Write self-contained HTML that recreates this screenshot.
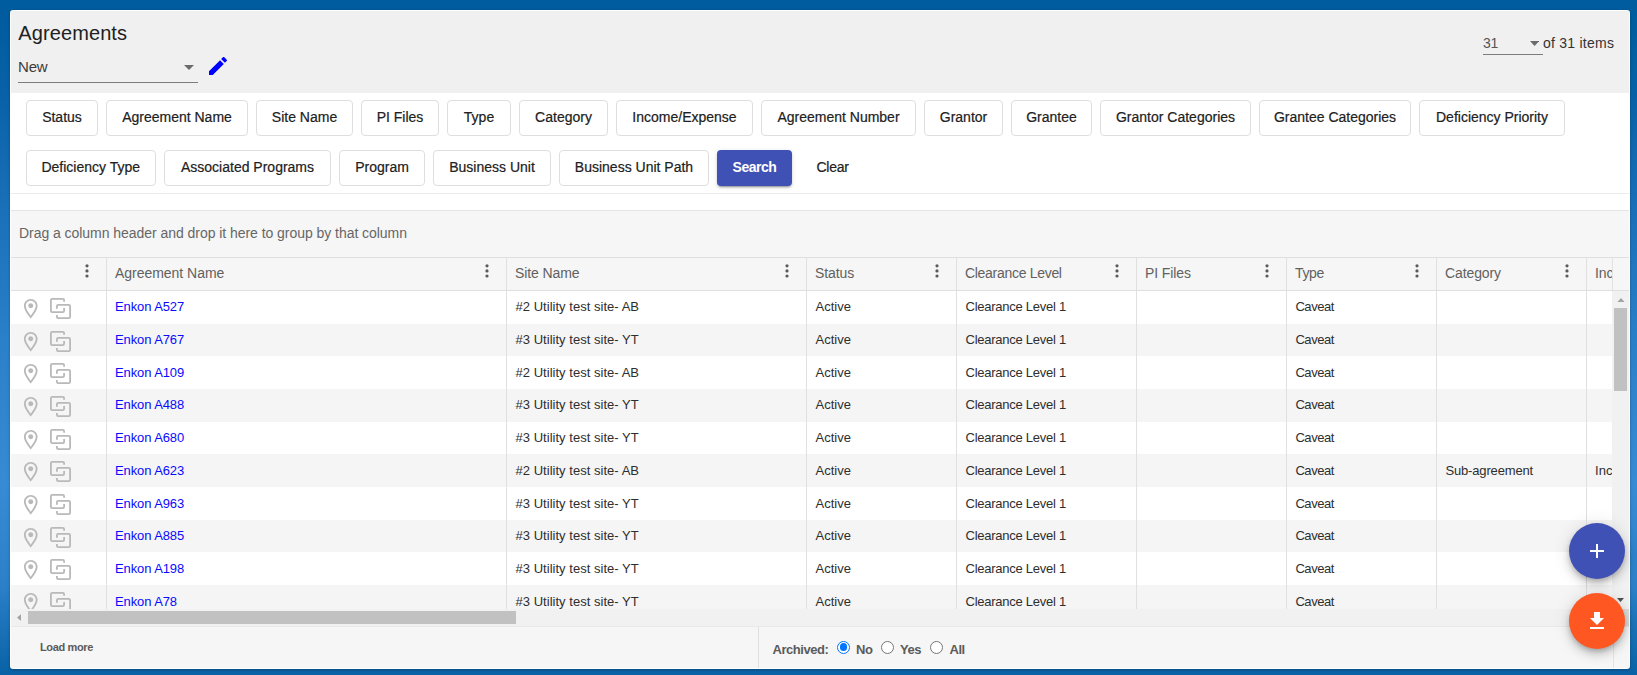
<!DOCTYPE html>
<html lang="en"><head><meta charset="utf-8"><title>Agreements</title>
<style>
*{box-sizing:border-box}
html,body{margin:0;padding:0}
body{width:1637px;height:675px;overflow:hidden;position:relative;font-family:"Liberation Sans",Arial,sans-serif;color:rgba(0,0,0,.87);
 background:linear-gradient(180deg,#005c9e 0px,#005c9e 12px,#0962a8 100px,#1a70b8 205px,#2a80c8 336px,#378bd4 486px,#2b80c8 586px,#0b64a8 668px,#0a62a6 675px);}
.abs{position:absolute}
.panel{position:absolute;left:10px;top:10px;width:1620px;height:658.7px;background:#fff;border-radius:3px;overflow:hidden;box-shadow:0 1px 3px rgba(0,0,0,.3)}
.tophdr{position:absolute;left:1px;top:1px;width:1618px;height:82px;background:#f0f0f0}
.t{position:absolute;white-space:nowrap;line-height:1}
.title{left:8.300px;top:13.300px;font-size:20px;color:#212121;letter-spacing:.1px}
.sel{position:absolute;border-bottom:1px solid #7d7d7d}
.caret{position:absolute;width:0;height:0;border-left:5px solid transparent;border-right:5px solid transparent;border-top:5px solid #6b6b6b}
.fb{position:absolute;height:36px;border:1px solid #dedede;border-radius:4px;background:#fff;font-size:14px;line-height:32px;text-align:center;white-space:nowrap;color:#212121;-webkit-text-stroke:.2px #212121}
.search{position:absolute;left:707px;top:140px;width:75px;height:36px;border-radius:4px;background:#3f51b5;color:#fff;font-weight:700;font-size:14px;line-height:34px;text-align:center;letter-spacing:-.48px;box-shadow:0 3px 1px -2px rgba(0,0,0,.2),0 2px 2px 0 rgba(0,0,0,.14),0 1px 5px 0 rgba(0,0,0,.12)}
.hline{position:absolute;left:0;width:1620px;height:1px}
.group{position:absolute;left:1px;top:200px;width:1618px;height:47px;background:#f6f6f6;border-top:1px solid #e4e4e4}
.ghead{position:absolute;left:1px;top:247px;width:1618px;height:34px;background:#f6f6f6;border-top:1px solid #dfdfdf;border-bottom:1px solid #dfdfdf}
.vl{position:absolute;width:1px;background:#e0e0e0}
.ht{font-size:14px;color:#616161;top:7.500px;letter-spacing:-.1px}
.row{position:absolute;left:1px;width:1601px;background:#fff;overflow:hidden}
.row.alt{background:#f5f5f5}
.c{position:absolute;font-size:13px;line-height:1;white-space:nowrap;color:#2e2e2e;letter-spacing:.03px}
a.c{letter-spacing:-.1px;color:#0a0aff;text-decoration:none}
.pin{position:absolute;left:8.250px;width:23.500px;height:23.500px;fill:#b9b9b9}
.cpy{position:absolute;left:39px;width:21px;height:21px}
.dots{position:absolute;width:4px;height:14px;fill:#5a5a5a;overflow:visible}
.fab{position:absolute;width:56px;height:56px;border-radius:50%;box-shadow:0 3px 5px -1px rgba(0,0,0,.2),0 6px 10px 0 rgba(0,0,0,.14),0 1px 18px 0 rgba(0,0,0,.12)}
.radio{position:absolute;width:13px;height:13px;border-radius:50%;border:1px solid #767676;background:#fff}
.radio.on{border:1.250px solid #0075ff}
.radio.on::after{content:"";position:absolute;left:1.550px;top:1.550px;width:7.400px;height:7.400px;border-radius:50%;background:#0075ff}
.fl{font-size:13px;font-weight:700;color:#5b5b5b;letter-spacing:-.45px}
</style></head><body>
<div class="panel">
<div class="tophdr"></div>
<div class="t title">Agreements</div>
<div class="sel" style="left:8px;top:44px;width:180px;height:29px"></div>
<div class="t" style="left:8px;top:48.500px;font-size:15px;color:#3c3c3c;letter-spacing:-.2px">New</div>
<div class="caret" style="left:173.500px;top:55px"></div>
<svg class="abs" style="left:196px;top:44px;width:24px;height:24px" viewBox="0 0 24 24"><path fill="#0000ff" d="M3 17.250V21h3.750L17.810 9.940l-3.750-3.750L3 17.250zM20.710 7.040c.390-.390.390-1.020 0-1.410l-2.340-2.340c-.390-.390-1.020-.390-1.410 0l-1.830 1.830 3.750 3.750 1.830-1.830z"/></svg>
<div class="sel" style="left:1473px;top:20px;width:60px;height:24.500px"></div>
<div class="t" style="left:1473px;top:26px;font-size:14px;color:#555;letter-spacing:-.2px">31</div>
<svg class="abs" style="left:1519.700px;top:31.100px;width:9.200px;height:5px" viewBox="0 0 9.200 5"><path d="M0 0H9.200L4.600 5z" fill="#6b6b6b"/></svg>
<div class="t" style="left:1533px;top:26px;font-size:14px;color:#333;letter-spacing:.24px">of 31 items</div>
<div class="fb" style="left:16px;top:90px;width:72px">Status</div>
<div class="fb" style="left:96px;top:90px;width:142px">Agreement Name</div>
<div class="fb" style="left:246px;top:90px;width:97px">Site Name</div>
<div class="fb" style="left:351px;top:90px;width:78px">PI Files</div>
<div class="fb" style="left:437px;top:90px;width:64px">Type</div>
<div class="fb" style="left:509px;top:90px;width:89px">Category</div>
<div class="fb" style="left:606px;top:90px;width:137px">Income/Expense</div>
<div class="fb" style="left:751px;top:90px;width:155px">Agreement Number</div>
<div class="fb" style="left:914px;top:90px;width:79px">Grantor</div>
<div class="fb" style="left:1001px;top:90px;width:81px">Grantee</div>
<div class="fb" style="left:1090px;top:90px;width:151px">Grantor Categories</div>
<div class="fb" style="left:1249px;top:90px;width:152px">Grantee Categories</div>
<div class="fb" style="left:1409px;top:90px;width:146px">Deficiency Priority</div>
<div class="fb" style="left:16px;top:140px;width:129.5px">Deficiency Type</div>
<div class="fb" style="left:154px;top:140px;width:167px">Associated Programs</div>
<div class="fb" style="left:329px;top:140px;width:86px">Program</div>
<div class="fb" style="left:423px;top:140px;width:118px">Business Unit</div>
<div class="fb" style="left:549px;top:140px;width:150px">Business Unit Path</div>
<div class="search">Search</div>
<div class="t" style="left:806.500px;top:149.500px;font-size:14px;color:#212121;letter-spacing:-.25px;-webkit-text-stroke:.2px #212121">Clear</div>
<div class="hline" style="top:183px;background:#ececec"></div>
<div class="group"><div class="t" style="left:8px;top:15px;font-size:14px;color:#666;letter-spacing:-.045px">Drag a column header and drop it here to group by that column</div></div>
<div class="row" style="top:280.80px;height:33.00px"><svg class="pin" style="top:6.100px" viewBox="0 0 24 24"><path d="M12 2C8.130 2 5 5.130 5 9c0 5.250 7 13 7 13s7-7.750 7-13c0-3.870-3.130-7-7-7zM6.900 9c0-2.820 2.280-5.100 5.100-5.100s5.100 2.280 5.100 5.100c0 2.940-2.940 7.300-5.100 10.050C9.880 16.330 6.900 11.910 6.900 9z"/><circle cx="12" cy="9" r="2.550"/></svg><svg class="cpy" style="top:7px" viewBox="0 0 21 21" fill="none" stroke="#b9b9b9" stroke-width="1.800"><path d="M14.100 3.700V2.200Q14.100 .900 12.800 .900H2.200Q.900 .900 .900 2.200V12.800Q.900 14.100 2.200 14.100H12.800Q14.100 14.100 14.100 12.800V10.100"/><path d="M6.900 10.800V8.200Q6.900 6.900 8.200 6.900H18.800Q20.100 6.900 20.100 8.200V18.800Q20.100 20.100 18.800 20.100H8.200Q6.900 20.100 6.900 18.800V17"/></svg><a class="c" style="left:104px;top:9.500px">Enkon A527</a><span class="c" style="left:504.500px;top:9.500px">#2 Utility test site- AB</span><span class="c" style="left:804.500px;top:9.500px">Active</span><span class="c" style="left:954.500px;top:9.500px;letter-spacing:-.26px">Clearance Level 1</span><span class="c" style="left:1284.400px;top:9.500px;letter-spacing:-.42px">Caveat</span></div>
<div class="row alt" style="top:313.50px;height:33.00px"><svg class="pin" style="top:6.100px" viewBox="0 0 24 24"><path d="M12 2C8.130 2 5 5.130 5 9c0 5.250 7 13 7 13s7-7.750 7-13c0-3.870-3.130-7-7-7zM6.900 9c0-2.820 2.280-5.100 5.100-5.100s5.100 2.280 5.100 5.100c0 2.940-2.940 7.300-5.100 10.050C9.880 16.330 6.900 11.910 6.900 9z"/><circle cx="12" cy="9" r="2.550"/></svg><svg class="cpy" style="top:7px" viewBox="0 0 21 21" fill="none" stroke="#b9b9b9" stroke-width="1.800"><path d="M14.100 3.700V2.200Q14.100 .900 12.800 .900H2.200Q.900 .900 .900 2.200V12.800Q.900 14.100 2.200 14.100H12.800Q14.100 14.100 14.100 12.800V10.100"/><path d="M6.900 10.800V8.200Q6.900 6.900 8.200 6.900H18.800Q20.100 6.900 20.100 8.200V18.800Q20.100 20.100 18.800 20.100H8.200Q6.900 20.100 6.900 18.800V17"/></svg><a class="c" style="left:104px;top:9.500px">Enkon A767</a><span class="c" style="left:504.500px;top:9.500px">#3 Utility test site- YT</span><span class="c" style="left:804.500px;top:9.500px">Active</span><span class="c" style="left:954.500px;top:9.500px;letter-spacing:-.26px">Clearance Level 1</span><span class="c" style="left:1284.400px;top:9.500px;letter-spacing:-.42px">Caveat</span></div>
<div class="row" style="top:346.20px;height:33.00px"><svg class="pin" style="top:6.100px" viewBox="0 0 24 24"><path d="M12 2C8.130 2 5 5.130 5 9c0 5.250 7 13 7 13s7-7.750 7-13c0-3.870-3.130-7-7-7zM6.900 9c0-2.820 2.280-5.100 5.100-5.100s5.100 2.280 5.100 5.100c0 2.940-2.940 7.300-5.100 10.050C9.880 16.330 6.900 11.910 6.900 9z"/><circle cx="12" cy="9" r="2.550"/></svg><svg class="cpy" style="top:7px" viewBox="0 0 21 21" fill="none" stroke="#b9b9b9" stroke-width="1.800"><path d="M14.100 3.700V2.200Q14.100 .900 12.800 .900H2.200Q.900 .900 .900 2.200V12.800Q.900 14.100 2.200 14.100H12.800Q14.100 14.100 14.100 12.800V10.100"/><path d="M6.900 10.800V8.200Q6.900 6.900 8.200 6.900H18.800Q20.100 6.900 20.100 8.200V18.800Q20.100 20.100 18.800 20.100H8.200Q6.900 20.100 6.900 18.800V17"/></svg><a class="c" style="left:104px;top:9.500px">Enkon A109</a><span class="c" style="left:504.500px;top:9.500px">#2 Utility test site- AB</span><span class="c" style="left:804.500px;top:9.500px">Active</span><span class="c" style="left:954.500px;top:9.500px;letter-spacing:-.26px">Clearance Level 1</span><span class="c" style="left:1284.400px;top:9.500px;letter-spacing:-.42px">Caveat</span></div>
<div class="row alt" style="top:378.90px;height:33.00px"><svg class="pin" style="top:6.100px" viewBox="0 0 24 24"><path d="M12 2C8.130 2 5 5.130 5 9c0 5.250 7 13 7 13s7-7.750 7-13c0-3.870-3.130-7-7-7zM6.900 9c0-2.820 2.280-5.100 5.100-5.100s5.100 2.280 5.100 5.100c0 2.940-2.940 7.300-5.100 10.050C9.880 16.330 6.900 11.910 6.900 9z"/><circle cx="12" cy="9" r="2.550"/></svg><svg class="cpy" style="top:7px" viewBox="0 0 21 21" fill="none" stroke="#b9b9b9" stroke-width="1.800"><path d="M14.100 3.700V2.200Q14.100 .900 12.800 .900H2.200Q.900 .900 .900 2.200V12.800Q.900 14.100 2.200 14.100H12.800Q14.100 14.100 14.100 12.800V10.100"/><path d="M6.900 10.800V8.200Q6.900 6.900 8.200 6.900H18.800Q20.100 6.900 20.100 8.200V18.800Q20.100 20.100 18.800 20.100H8.200Q6.900 20.100 6.900 18.800V17"/></svg><a class="c" style="left:104px;top:9.500px">Enkon A488</a><span class="c" style="left:504.500px;top:9.500px">#3 Utility test site- YT</span><span class="c" style="left:804.500px;top:9.500px">Active</span><span class="c" style="left:954.500px;top:9.500px;letter-spacing:-.26px">Clearance Level 1</span><span class="c" style="left:1284.400px;top:9.500px;letter-spacing:-.42px">Caveat</span></div>
<div class="row" style="top:411.60px;height:33.00px"><svg class="pin" style="top:6.100px" viewBox="0 0 24 24"><path d="M12 2C8.130 2 5 5.130 5 9c0 5.250 7 13 7 13s7-7.750 7-13c0-3.870-3.130-7-7-7zM6.900 9c0-2.820 2.280-5.100 5.100-5.100s5.100 2.280 5.100 5.100c0 2.940-2.940 7.300-5.100 10.050C9.880 16.330 6.900 11.910 6.900 9z"/><circle cx="12" cy="9" r="2.550"/></svg><svg class="cpy" style="top:7px" viewBox="0 0 21 21" fill="none" stroke="#b9b9b9" stroke-width="1.800"><path d="M14.100 3.700V2.200Q14.100 .900 12.800 .900H2.200Q.900 .900 .900 2.200V12.800Q.900 14.100 2.200 14.100H12.800Q14.100 14.100 14.100 12.800V10.100"/><path d="M6.900 10.800V8.200Q6.900 6.900 8.200 6.900H18.800Q20.100 6.900 20.100 8.200V18.800Q20.100 20.100 18.800 20.100H8.200Q6.900 20.100 6.900 18.800V17"/></svg><a class="c" style="left:104px;top:9.500px">Enkon A680</a><span class="c" style="left:504.500px;top:9.500px">#3 Utility test site- YT</span><span class="c" style="left:804.500px;top:9.500px">Active</span><span class="c" style="left:954.500px;top:9.500px;letter-spacing:-.26px">Clearance Level 1</span><span class="c" style="left:1284.400px;top:9.500px;letter-spacing:-.42px">Caveat</span></div>
<div class="row alt" style="top:444.30px;height:33.00px"><svg class="pin" style="top:6.100px" viewBox="0 0 24 24"><path d="M12 2C8.130 2 5 5.130 5 9c0 5.250 7 13 7 13s7-7.750 7-13c0-3.870-3.130-7-7-7zM6.900 9c0-2.820 2.280-5.100 5.100-5.100s5.100 2.280 5.100 5.100c0 2.940-2.940 7.300-5.100 10.050C9.880 16.330 6.900 11.910 6.900 9z"/><circle cx="12" cy="9" r="2.550"/></svg><svg class="cpy" style="top:7px" viewBox="0 0 21 21" fill="none" stroke="#b9b9b9" stroke-width="1.800"><path d="M14.100 3.700V2.200Q14.100 .900 12.800 .900H2.200Q.900 .900 .900 2.200V12.800Q.900 14.100 2.200 14.100H12.800Q14.100 14.100 14.100 12.800V10.100"/><path d="M6.900 10.800V8.200Q6.900 6.900 8.200 6.900H18.800Q20.100 6.900 20.100 8.200V18.800Q20.100 20.100 18.800 20.100H8.200Q6.900 20.100 6.900 18.800V17"/></svg><a class="c" style="left:104px;top:9.500px">Enkon A623</a><span class="c" style="left:504.500px;top:9.500px">#2 Utility test site- AB</span><span class="c" style="left:804.500px;top:9.500px">Active</span><span class="c" style="left:954.500px;top:9.500px;letter-spacing:-.26px">Clearance Level 1</span><span class="c" style="left:1284.400px;top:9.500px;letter-spacing:-.42px">Caveat</span><span class="c" style="left:1434.400px;top:9.500px;letter-spacing:-.15px">Sub-agreement</span><span class="c" style="left:1584px;top:9.500px">Inc</span></div>
<div class="row" style="top:477.00px;height:33.00px"><svg class="pin" style="top:6.100px" viewBox="0 0 24 24"><path d="M12 2C8.130 2 5 5.130 5 9c0 5.250 7 13 7 13s7-7.750 7-13c0-3.870-3.130-7-7-7zM6.900 9c0-2.820 2.280-5.100 5.100-5.100s5.100 2.280 5.100 5.100c0 2.940-2.940 7.300-5.100 10.050C9.880 16.330 6.900 11.910 6.900 9z"/><circle cx="12" cy="9" r="2.550"/></svg><svg class="cpy" style="top:7px" viewBox="0 0 21 21" fill="none" stroke="#b9b9b9" stroke-width="1.800"><path d="M14.100 3.700V2.200Q14.100 .900 12.800 .900H2.200Q.900 .900 .900 2.200V12.800Q.900 14.100 2.200 14.100H12.800Q14.100 14.100 14.100 12.800V10.100"/><path d="M6.900 10.800V8.200Q6.900 6.900 8.200 6.900H18.800Q20.100 6.900 20.100 8.200V18.800Q20.100 20.100 18.800 20.100H8.200Q6.900 20.100 6.900 18.800V17"/></svg><a class="c" style="left:104px;top:9.500px">Enkon A963</a><span class="c" style="left:504.500px;top:9.500px">#3 Utility test site- YT</span><span class="c" style="left:804.500px;top:9.500px">Active</span><span class="c" style="left:954.500px;top:9.500px;letter-spacing:-.26px">Clearance Level 1</span><span class="c" style="left:1284.400px;top:9.500px;letter-spacing:-.42px">Caveat</span></div>
<div class="row alt" style="top:509.70px;height:33.00px"><svg class="pin" style="top:6.100px" viewBox="0 0 24 24"><path d="M12 2C8.130 2 5 5.130 5 9c0 5.250 7 13 7 13s7-7.750 7-13c0-3.870-3.130-7-7-7zM6.900 9c0-2.820 2.280-5.100 5.100-5.100s5.100 2.280 5.100 5.100c0 2.940-2.940 7.300-5.100 10.050C9.880 16.330 6.900 11.910 6.900 9z"/><circle cx="12" cy="9" r="2.550"/></svg><svg class="cpy" style="top:7px" viewBox="0 0 21 21" fill="none" stroke="#b9b9b9" stroke-width="1.800"><path d="M14.100 3.700V2.200Q14.100 .900 12.800 .900H2.200Q.900 .900 .900 2.200V12.800Q.900 14.100 2.200 14.100H12.800Q14.100 14.100 14.100 12.800V10.100"/><path d="M6.900 10.800V8.200Q6.900 6.900 8.200 6.900H18.800Q20.100 6.900 20.100 8.200V18.800Q20.100 20.100 18.800 20.100H8.200Q6.900 20.100 6.900 18.800V17"/></svg><a class="c" style="left:104px;top:9.500px">Enkon A885</a><span class="c" style="left:504.500px;top:9.500px">#3 Utility test site- YT</span><span class="c" style="left:804.500px;top:9.500px">Active</span><span class="c" style="left:954.500px;top:9.500px;letter-spacing:-.26px">Clearance Level 1</span><span class="c" style="left:1284.400px;top:9.500px;letter-spacing:-.42px">Caveat</span></div>
<div class="row" style="top:542.40px;height:33.00px"><svg class="pin" style="top:6.100px" viewBox="0 0 24 24"><path d="M12 2C8.130 2 5 5.130 5 9c0 5.250 7 13 7 13s7-7.750 7-13c0-3.870-3.130-7-7-7zM6.900 9c0-2.820 2.280-5.100 5.100-5.100s5.100 2.280 5.100 5.100c0 2.940-2.940 7.300-5.100 10.050C9.880 16.330 6.900 11.910 6.900 9z"/><circle cx="12" cy="9" r="2.550"/></svg><svg class="cpy" style="top:7px" viewBox="0 0 21 21" fill="none" stroke="#b9b9b9" stroke-width="1.800"><path d="M14.100 3.700V2.200Q14.100 .900 12.800 .900H2.200Q.900 .900 .900 2.200V12.800Q.900 14.100 2.200 14.100H12.800Q14.100 14.100 14.100 12.800V10.100"/><path d="M6.900 10.800V8.200Q6.900 6.900 8.200 6.900H18.800Q20.100 6.900 20.100 8.200V18.800Q20.100 20.100 18.800 20.100H8.200Q6.900 20.100 6.900 18.800V17"/></svg><a class="c" style="left:104px;top:9.500px">Enkon A198</a><span class="c" style="left:504.500px;top:9.500px">#3 Utility test site- YT</span><span class="c" style="left:804.500px;top:9.500px">Active</span><span class="c" style="left:954.500px;top:9.500px;letter-spacing:-.26px">Clearance Level 1</span><span class="c" style="left:1284.400px;top:9.500px;letter-spacing:-.42px">Caveat</span></div>
<div class="row alt" style="top:575.10px;height:33.00px"><svg class="pin" style="top:6.100px" viewBox="0 0 24 24"><path d="M12 2C8.130 2 5 5.130 5 9c0 5.250 7 13 7 13s7-7.750 7-13c0-3.870-3.130-7-7-7zM6.900 9c0-2.820 2.280-5.100 5.100-5.100s5.100 2.280 5.100 5.100c0 2.940-2.940 7.300-5.100 10.050C9.880 16.330 6.900 11.910 6.900 9z"/><circle cx="12" cy="9" r="2.550"/></svg><svg class="cpy" style="top:7px" viewBox="0 0 21 21" fill="none" stroke="#b9b9b9" stroke-width="1.800"><path d="M14.100 3.700V2.200Q14.100 .900 12.800 .900H2.200Q.900 .900 .900 2.200V12.800Q.900 14.100 2.200 14.100H12.800Q14.100 14.100 14.100 12.800V10.100"/><path d="M6.900 10.800V8.200Q6.900 6.900 8.200 6.900H18.800Q20.100 6.900 20.100 8.200V18.800Q20.100 20.100 18.800 20.100H8.200Q6.900 20.100 6.900 18.800V17"/></svg><a class="c" style="left:104px;top:9.500px">Enkon A78</a><span class="c" style="left:504.500px;top:9.500px">#3 Utility test site- YT</span><span class="c" style="left:804.500px;top:9.500px">Active</span><span class="c" style="left:954.500px;top:9.500px;letter-spacing:-.26px">Clearance Level 1</span><span class="c" style="left:1284.400px;top:9.500px;letter-spacing:-.42px">Caveat</span></div>
<div class="ghead"><svg class="dots" style="left:73.5px;top:5.500px" viewBox="0 0 4 14"><circle cx="2" cy="1.800" r="1.600"/><circle cx="2" cy="6.900" r="1.600"/><circle cx="2" cy="12" r="1.600"/></svg><div class="t ht" style="left:104.0px;letter-spacing:-.03px">Agreement Name</div><svg class="dots" style="left:473.5px;top:5.500px" viewBox="0 0 4 14"><circle cx="2" cy="1.800" r="1.600"/><circle cx="2" cy="6.900" r="1.600"/><circle cx="2" cy="12" r="1.600"/></svg><div class="t ht" style="left:504.0px">Site Name</div><svg class="dots" style="left:773.5px;top:5.500px" viewBox="0 0 4 14"><circle cx="2" cy="1.800" r="1.600"/><circle cx="2" cy="6.900" r="1.600"/><circle cx="2" cy="12" r="1.600"/></svg><div class="t ht" style="left:804.0px">Status</div><svg class="dots" style="left:923.5px;top:5.500px" viewBox="0 0 4 14"><circle cx="2" cy="1.800" r="1.600"/><circle cx="2" cy="6.900" r="1.600"/><circle cx="2" cy="12" r="1.600"/></svg><div class="t ht" style="left:954.0px;letter-spacing:-.3px">Clearance Level</div><svg class="dots" style="left:1103.5px;top:5.500px" viewBox="0 0 4 14"><circle cx="2" cy="1.800" r="1.600"/><circle cx="2" cy="6.900" r="1.600"/><circle cx="2" cy="12" r="1.600"/></svg><div class="t ht" style="left:1134.0px">PI Files</div><svg class="dots" style="left:1253.5px;top:5.500px" viewBox="0 0 4 14"><circle cx="2" cy="1.800" r="1.600"/><circle cx="2" cy="6.900" r="1.600"/><circle cx="2" cy="12" r="1.600"/></svg><div class="t ht" style="left:1284.0px;letter-spacing:-.35px">Type</div><svg class="dots" style="left:1403.5px;top:5.500px" viewBox="0 0 4 14"><circle cx="2" cy="1.800" r="1.600"/><circle cx="2" cy="6.900" r="1.600"/><circle cx="2" cy="12" r="1.600"/></svg><div class="t ht" style="left:1434.0px">Category</div><svg class="dots" style="left:1553.5px;top:5.500px" viewBox="0 0 4 14"><circle cx="2" cy="1.800" r="1.600"/><circle cx="2" cy="6.900" r="1.600"/><circle cx="2" cy="12" r="1.600"/></svg><div class="t ht" style="left:1584.0px">Inc</div></div>
<div class="vl" style="left:96.0px;top:247px;height:352px"></div><div class="vl" style="left:496.0px;top:247px;height:352px"></div><div class="vl" style="left:796.0px;top:247px;height:352px"></div><div class="vl" style="left:946.0px;top:247px;height:352px"></div><div class="vl" style="left:1126.0px;top:247px;height:352px"></div><div class="vl" style="left:1276.0px;top:247px;height:352px"></div><div class="vl" style="left:1426.0px;top:247px;height:352px"></div><div class="vl" style="left:1576.0px;top:247px;height:352px"></div>
<div class="abs" style="left:1602px;top:248px;width:17px;height:32px;background:#f6f6f6;border-left:1px solid #e2e2e2"></div>
<div class="abs" style="left:1602px;top:281px;width:17px;height:318px;background:#f1f1f1"></div>
<div class="abs" style="left:1604px;top:298px;width:13px;height:82.500px;background:#c1c1c1"></div>
<svg class="abs" style="left:1606.500px;top:287.500px;width:8px;height:4.500px" viewBox="0 0 8 4.500"><path d="M4 0L8 4.500H0z" fill="#a3a3a3"/></svg>
<svg class="abs" style="left:1607px;top:588px;width:7px;height:4px" viewBox="0 0 7 4"><path d="M3.500 4L7 0H0z" fill="#505050"/></svg>
<div class="abs" style="left:1px;top:599px;width:1601px;height:17px;background:#f1f1f1"></div>
<div class="abs" style="left:1602px;top:599px;width:17px;height:17px;background:#dcdcdc"></div>
<div class="abs" style="left:18px;top:601px;width:488px;height:13px;background:#c1c1c1"></div>
<svg class="abs" style="left:6.800px;top:603.900px;width:4.300px;height:7.200px" viewBox="0 0 4.300 7.200"><path d="M0 3.600L4.300 0V7.200z" fill="#a3a3a3"/></svg>
<div class="abs" style="left:1px;top:616px;width:1618px;height:42px;background:#f6f6f6;border-top:1px solid #e9e9e9"></div>
<div class="vl" style="left:748px;top:617px;height:41px;background:#e0e0e0"></div>
<div class="vl" style="left:1602.500px;top:617px;height:41px;background:#e4e4e4"></div>
<div class="t" style="left:30px;top:631.500px;font-size:11px;font-weight:700;color:#5b5b5b;letter-spacing:-.36px">Load more</div>
<div class="t fl" style="left:762.500px;top:633px">Archived:</div>
<div class="radio on" style="left:827.050px;top:630.900px"></div><div class="t fl" style="left:846px;top:633px">No</div>
<div class="radio" style="left:871px;top:630.900px"></div><div class="t fl" style="left:890px;top:633px">Yes</div>
<div class="radio" style="left:920px;top:630.900px"></div><div class="t fl" style="left:939.500px;top:633px">All</div>
</div>
<div class="fab" style="left:1569px;top:522.500px;background:#3f51b5"><svg class="abs" style="left:16px;top:16px;width:24px;height:24px" viewBox="0 0 24 24"><path fill="#fff" d="M19 13h-6v6h-2v-6H5v-2h6V5h2v6h6v2z"/></svg></div>
<div class="fab" style="left:1569px;top:592.500px;background:#ff5722"><svg class="abs" style="left:16px;top:16px;width:24px;height:24px" viewBox="0 0 24 24"><path fill="#fff" d="M19 9h-4V3H9v6H5l7 7 7-7zM5 18v2h14v-2H5z"/></svg></div>
</body></html>
